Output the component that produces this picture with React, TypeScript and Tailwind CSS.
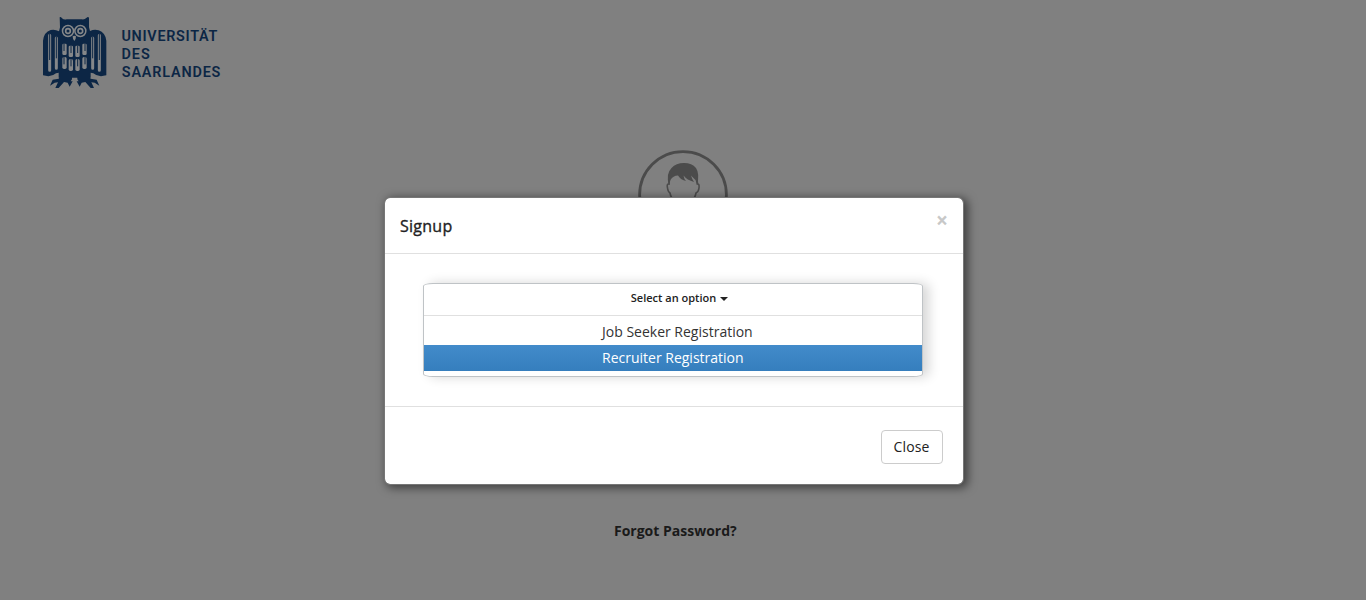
import { Fragment } from "react";

const FEATHERS = [79, 98, 118, 139];

function OwlLogo() {
  return (
    <svg width="80" height="84" viewBox="0 0 240 252" className="block shrink-0" aria-hidden="true">
      <g fill="#0c2645">
        <path d="M71 22 Q74 19 78 25 Q84 30 92 28 H138 Q146 29 151 24 Q156 19 159 23 V52 L162 63 Q176 56 188 61 Q208 68 211 92 V196 Q186 203 172 190 L164 188 V203 H68 V188 L60 190 Q46 203 21 196 V92 Q24 66 44 60 Q57 57 69 64 L72 52 Z" />
        <path d="M72 198 H108 V208 L104 214 H110 L101 230 L95 218 L84 216 L68 234 H58 L66 217 L56 218 L42 227 L50 209 L68 206 Z" />
        <path d="M160 198 H124 V208 L128 214 H122 L131 230 L137 218 L148 216 L164 234 H174 L166 217 L176 218 L190 227 L182 209 L164 206 Z" />
      </g>
      <g fill="none" stroke="#858789">
        <circle cx="96" cy="63" r="16.5" strokeWidth="4.5" />
        <circle cx="133" cy="63" r="16.5" strokeWidth="4.5" />
        <circle cx="96" cy="63" r="7" strokeWidth="5" />
        <circle cx="133" cy="63" r="7" strokeWidth="5" />
        <path d="M41 76V181M61 84V175M170 84V175M190 76V181" strokeWidth="9" strokeLinecap="round" />
      </g>
      <path d="M110 79 Q115 75 120 79 Q120 88 115 93 Q110 88 110 79Z" fill="#858789" />
      <g fill="#858789">
        {FEATHERS.map((x, i) => {
          const drop = i === 1 || i === 2 ? 6 : 0;
          return (
            <Fragment key={x}>
              <rect x={x} y={101 + drop} width="13" height="34" rx="4" />
              <rect x={x} y={141 + drop} width="13" height="36" rx="5" />
            </Fragment>
          );
        })}
      </g>
      <path d="M84 101V123M105 107V129M125 107V129M147 101V123M84 141V163M105 147V169M125 147V169M147 141V163M41 71V150M61 79V145M170 79V145M190 71V150" stroke="#0c2645" strokeWidth="3" />
    </svg>
  );
}

function Wordmark() {
  return (
    <svg width="120" height="64" viewBox="0 0 120 64" className="-ml-[6px] mt-[10px] block shrink-0">
      <g fill="#0c2645" fontFamily="Roboto, sans-serif" fontWeight="600" fontSize="14.4">
        <text x="11.4" y="21.2" textLength="96">UNIVERSITÄT</text>
        <text x="11.4" y="39" textLength="28.4">DES</text>
        <text x="11.8" y="56.6" textLength="98.6">SAARLANDES</text>
      </g>
    </svg>
  );
}

function Avatar() {
  return (
    <svg width="90" height="90" viewBox="0 0 90 90" className="block" fill="none" aria-hidden="true">
      <circle cx="45" cy="45" r="43.4" stroke="#4b4b4b" strokeWidth="2.8" />
      <path d="M31 35 Q27.5 24 33.5 18 Q38 13 46 13 Q54 13 58 18 Q62 24 59 35 L57.5 30 L53 25.5 Q54 29 56 32 Q49 30 45.5 25.5 Q46 29 48 31 Q43 30 40 25.5 Q35 25.5 32.5 30 Z" fill="#4b4b4b" />
      <path d="M31 29 L31 34 Q28.5 33.5 29.5 38 Q30 42 32 43 Q33 49 38 53 Q45 59 52 53 Q57 49 58 43 Q60.5 42 61 38 Q61.5 33.5 59.5 34 L59 29" stroke="#4b4b4b" strokeWidth="1.6" />
    </svg>
  );
}

function SignupDialog() {
  return (
    <section
      role="dialog"
      aria-label="Signup"
      className="absolute left-[384px] top-[197px] flex h-[288px] w-[580px] flex-col rounded-md border border-[#777] bg-white bg-clip-padding shadow-[3px_2px_10px_1px_rgba(0,0,0,0.5)]"
    >
      <header className="flex h-14 shrink-0 justify-between border-b border-[#e0e0e0] pl-[15px] pr-[15px]">
        <h2 className="pt-[16px] text-[16px] font-medium leading-6 tracking-[0.25px] text-[#222] [-webkit-text-stroke:0.35px_#222]">Signup</h2>
        <button aria-label="Dismiss" className="mt-[12px] h-5 text-[21px] font-bold leading-5 text-[#c8c8c8]">
          ×
        </button>
      </header>
      <div className="h-[153px] shrink-0 border-b border-[#e0e0e0] pl-[38px] pt-[29px]">
        <div className="h-[94px] w-[500px] overflow-hidden rounded-[10px/3px] border border-[#bfc3c6] bg-white shadow-[6px_0px_12px_rgba(0,0,0,0.16)]">
          <button className="flex h-8 w-full items-center justify-center border-b border-[#e0e0e0] pb-[3px] pl-[13px] text-[11px] font-semibold text-[#222]">
            Select an option
            <span className="ml-1 mt-[2px] border-x-4 border-t-4 border-x-transparent border-t-[#222]" />
          </button>
          <ul className="pt-[3px] text-[14px] leading-[26px] text-[#333]">
            <li className="h-[26px] pl-[178px]">Job Seeker Registration</li>
            <li className="h-[26px] bg-linear-to-b from-[#428bca] to-[#357ebd] pl-[178px] text-white">
              Recruiter Registration
            </li>
          </ul>
        </div>
      </div>
      <footer className="flex justify-end pr-5 pt-[23px]">
        <button className="h-[34px] w-[62px] rounded border border-[#ccc] pr-px text-[14px] leading-5 tracking-[0.1px] text-[#222]">Close</button>
      </footer>
    </section>
  );
}

export default function App() {
  return (
    <main className="relative flex h-[600px] w-full flex-col overflow-hidden bg-[#808080] font-['Open_Sans',sans-serif]">
      <header className="flex h-[150px] shrink-0 pl-9 pt-[10px]">
        <OwlLogo />
        <Wordmark />
      </header>
      <div className="flex h-[371px] shrink-0 justify-center">
        <Avatar />
      </div>
      <a className="ml-[614px] text-[14px] font-bold leading-5 text-[#1a1a1a]">Forgot Password?</a>
      <SignupDialog />
    </main>
  );
}
